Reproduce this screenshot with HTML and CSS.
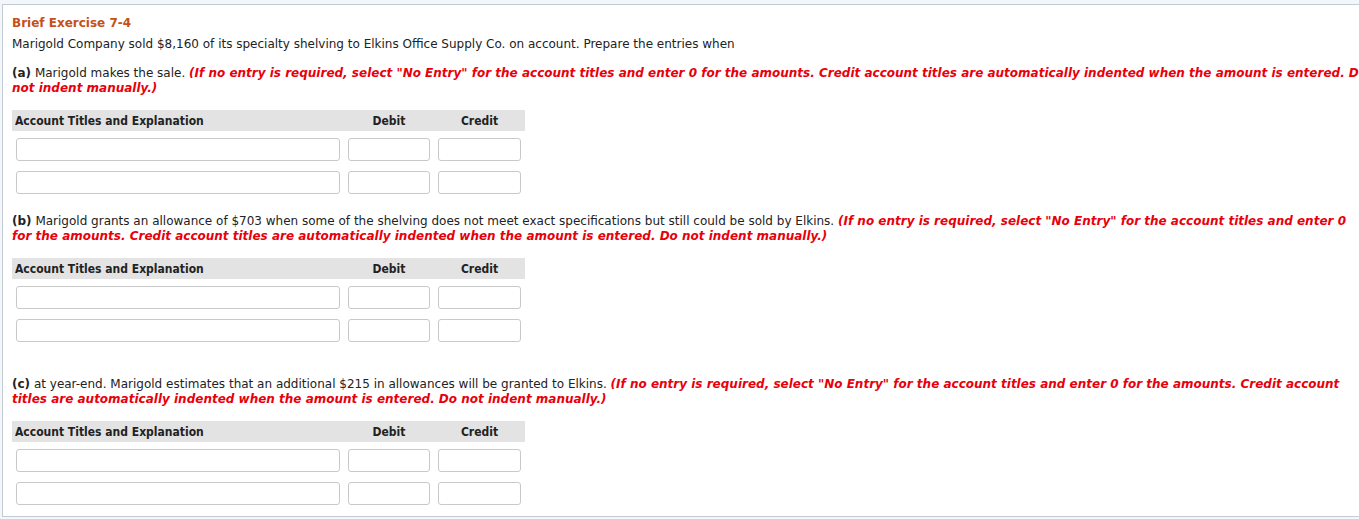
FILE: index.html
```html
<!DOCTYPE html>
<html>
<head>
<meta charset="utf-8">
<link rel="stylesheet" href="styles.css">
</head>
<body>
<div class="panel">
  <div class="title">Brief Exercise 7-4</div>
  <p class="intro">Marigold Company sold $8,160 of its specialty shelving to Elkins Office Supply Co. on account. Prepare the entries when</p>

  <p class="part first"><b>(a)</b> Marigold makes the sale. <span class="note">(If no entry is required, select "No Entry" for the account titles and enter 0 for the amounts. Credit account titles are automatically indented when the amount is entered. Do not indent manually.)</span></p>
  <div class="journal">
    <div class="head acct">Account Titles and Explanation</div>
    <div class="head num">Debit</div>
    <div class="head num">Credit</div>
    <div class="cell"><span class="field"></span></div>
    <div class="cell"><span class="field"></span></div>
    <div class="cell"><span class="field"></span></div>
    <div class="cell"><span class="field"></span></div>
    <div class="cell"><span class="field"></span></div>
    <div class="cell"><span class="field"></span></div>
  </div>

  <p class="part alt"><b>(b)</b> Marigold grants an allowance of $703 when some of the shelving does not meet exact specifications but still could be sold by Elkins. <span class="note">(If no entry is required, select "No Entry" for the account titles and enter 0 for the amounts. Credit account titles are automatically indented when the amount is entered. Do not indent manually.)</span></p>
  <div class="journal">
    <div class="head acct">Account Titles and Explanation</div>
    <div class="head num">Debit</div>
    <div class="head num">Credit</div>
    <div class="cell"><span class="field"></span></div>
    <div class="cell"><span class="field"></span></div>
    <div class="cell"><span class="field"></span></div>
    <div class="cell"><span class="field"></span></div>
    <div class="cell"><span class="field"></span></div>
    <div class="cell"><span class="field"></span></div>
  </div>

  <p class="part alt wide"><b>(c)</b> at year-end. Marigold estimates that an additional $215 in allowances will be granted to Elkins. <span class="note">(If no entry is required, select "No Entry" for the account titles and enter 0 for the amounts. Credit account titles are automatically indented when the amount is entered. Do not indent manually.)</span></p>
  <div class="journal">
    <div class="head acct">Account Titles and Explanation</div>
    <div class="head num">Debit</div>
    <div class="head num">Credit</div>
    <div class="cell"><span class="field"></span></div>
    <div class="cell"><span class="field"></span></div>
    <div class="cell"><span class="field"></span></div>
    <div class="cell"><span class="field"></span></div>
    <div class="cell"><span class="field"></span></div>
    <div class="cell"><span class="field"></span></div>
  </div>
</div>
</body>
</html>
```
FILE: styles.css
```css
html, body {
  margin: 0;
  padding: 0;
  background: #f4f7fa;
  overflow: hidden;
}
body {
  font-family: "DejaVu Sans", Verdana, sans-serif;
  font-size: 12px;
  line-height: 15px;
  color: #222;
  padding: 4px 0 0 2px;
}
.panel {
  width: 1400px;
  background: #fff;
  border: 1px solid #c3ccd6;
  border-right: none;
  padding: 11px 0 8px 9px;
}
.title {
  font-weight: bold;
  font-size: 12px;
  color: #c4501a;
  margin-bottom: 6px;
}
.intro {
  margin: 0 0 14px;
}
.part {
  margin: 0 0 13.5px;
  width: 1360px;
}
.part b {
  font-weight: bold;
}
.note {
  color: #e8000b;
  font-weight: bold;
  font-style: italic;
}
.alt {
  width: 1340px;
  margin-top: 17.5px;
}
.wide {
  margin-top: 32.5px;
}
.journal {
  display: grid;
  grid-template-columns: 332px 90px 91px;
  width: 513px;
}
.head {
  background: #e3e3e3;
  height: 21px;
  line-height: 23px;
  overflow: hidden;
  font-family: "DejaVu Sans Condensed", "DejaVu Sans", sans-serif;
  font-size: 12px;
  font-weight: bold;
  color: #222;
}
.head.acct {
  padding-left: 3px;
}
.head.num {
  text-align: center;
}
.cell {
  padding: 7px 4px 3px;
}
.field {
  display: block;
  height: 21px;
  border: 1px solid #c9c9c9;
  border-radius: 3px;
  background: #fff;
}
```
